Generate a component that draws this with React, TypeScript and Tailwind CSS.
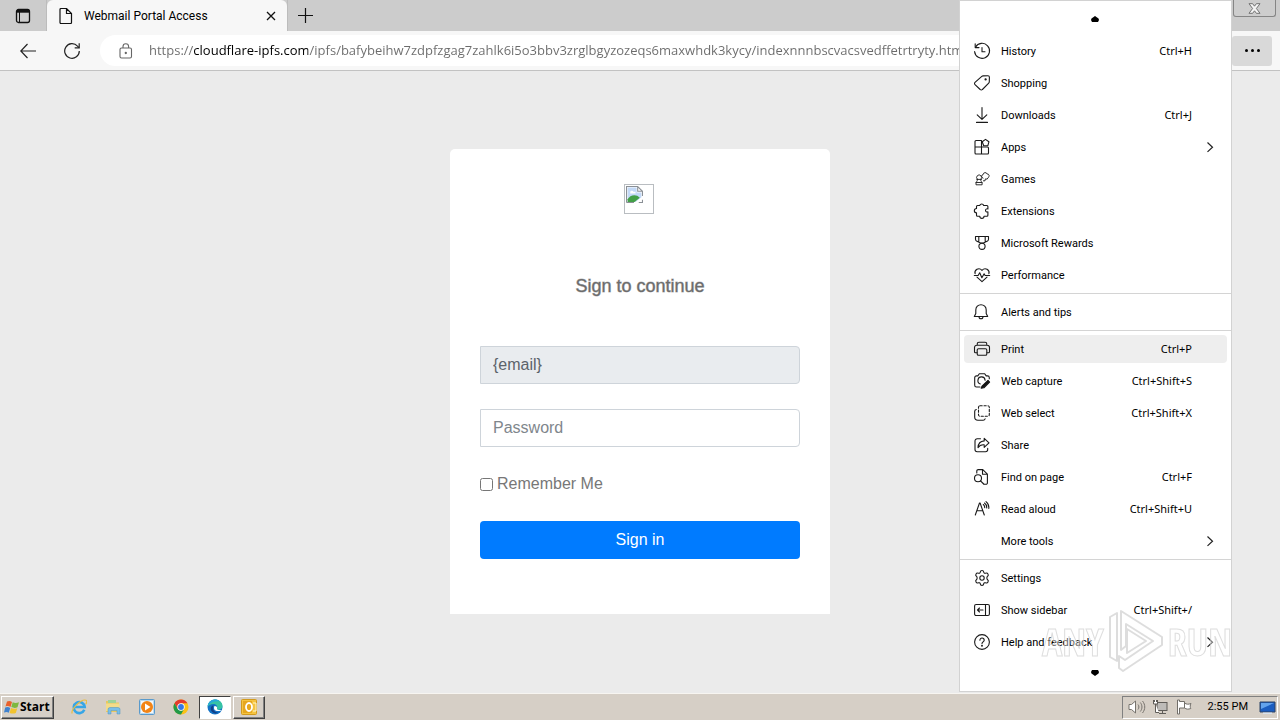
import { ReactNode } from "react"

type MenuEntry = {
  label: string
  icon?: ReactNode
  shortcut?: string
  submenu?: boolean
  active?: boolean
}

const LineIcon = ({ children }: { children?: ReactNode }) => (
  <svg
    className="size-4 shrink-0 overflow-visible"
    viewBox="0 0 16 16"
    fill="none"
    stroke="#1a1a1a"
    strokeWidth="1.1"
    strokeLinecap="round"
    strokeLinejoin="round"
    aria-hidden="true"
  >
    {children}
  </svg>
)

const menuGroups: MenuEntry[][] = [
  [
    {
      label: "History",
      shortcut: "Ctrl+H",
      icon: (
        <>
          <path d="M1.5 4.2A7.5 7.5 0 1 1 .6 8.6" />
          <path d="M1.2.8v3.8H5M8 4.5V8.8h3" />
        </>
      ),
    },
    {
      label: "Shopping",
      icon: (
        <>
          <path d="M9.3.9 14 .8a1.4 1.4 0 0 1 1.4 1.4l-.1 4.6a2 2 0 0 1-.6 1.3l-6.3 6.4a1.5 1.5 0 0 1-2.2 0L1 9.6a1.5 1.5 0 0 1 0-2.2l6.8-6a2 2 0 0 1 1.5-.5Z" />
          <circle cx="11.6" cy="4.4" r=".6" fill="#1a1a1a" />
        </>
      ),
    },
    {
      label: "Downloads",
      shortcut: "Ctrl+J",
      icon: <path d="M8 .5V12M3.2 7.8 8 12.4l4.8-4.6M2.5 15.4h11" />,
    },
    {
      label: "Apps",
      submenu: true,
      icon: (
        <>
          <path d="M7.500 1.500H2a1 1 0 0 0-1 1V14a1 1 0 0 0 1 1h11.500a1 1 0 0 0 1-1V9a1 1 0 0 0-1-1H1M7.500 1.500V15" />
          <path d="m11.500.4 3.400 2.400-1.100 4H9.700l-1.500-4z" />
        </>
      ),
    },
    {
      label: "Games",
      icon: (
        <>
          <path d="M3.400 8.300a2.500 2.500 0 1 1 3.400 0c-.3.500 0 2 1.300 3v2.500H2v-2.500c1.200-1 1.700-2.500 1.400-3ZM2.800 8.400h4.700M2.200 11.500h5.600" strokeWidth=".9" />
          <path d="M9 7.200a1.900 1.900 0 0 1 .2-3.700 2 2 0 0 1 3.900-.5 1.900 1.900 0 0 1 1 3.600 1.900 1.900 0 0 1-2.700 1.300l-.4 1.900H9.400" strokeWidth=".9" />
        </>
      ),
    },
    {
      label: "Extensions",
      icon: (
        <path d="M3.5 2.500h2.200a2.100 2.100 0 0 1 4 0h3.200a1 1 0 0 1 1 1v2.400c-3-.8-3.400 3.600 0 3v3.400a1 1 0 0 1-1 1H10a2.100 2.100 0 0 1-4.200 0H3.500a1 1 0 0 1-1-1V9.800a2.100 2.100 0 0 1 0-4.300v-2a1 1 0 0 1 1-1Z" />
      ),
    },
    {
      label: "Microsoft Rewards",
      icon: (
        <>
          <path d="M1.5 1.5h13v2.7a2 2 0 0 1-1 1.7L9.4 8H6.6L2.5 5.9a2 2 0 0 1-1-1.7ZM4.8 1.5v5.4M11.2 1.5v5.4" />
          <circle cx="8" cy="11.3" r="3.1" />
        </>
      ),
    },
    {
      label: "Performance",
      icon: (
        <>
          <path d="M1.100 6.700C0 3.200 4.800-.4 8 3.400 11.200-.4 16 3.200 14.900 6.700M3 10.200l5 4.500 5-4.500" />
          <path d="M.3 8.500h3.800l1.600-2.700 2.200 5 2.200-4 1 1.700h4.600" />
        </>
      ),
    },
  ],
  [
    {
      label: "Alerts and tips",
      icon: <path d="M7 .7a5.200 5.200 0 0 1 5.200 5.200v3.600l1.500 3H.3l1.500-3V5.900A5.200 5.200 0 0 1 7 .7ZM5 12.700a2 2 0 0 0 4 0" />,
    },
  ],
  [
    {
      label: "Print",
      shortcut: "Ctrl+P",
      active: true,
      icon: (
        <>
          <path d="M3.200 4.100V3a1.800 1.800 0 0 1 1.800-1.800h6A1.800 1.800 0 0 1 12.800 3v1.100M3 11.800H1.500a1 1 0 0 1-1-1V6.500a2.300 2.300 0 0 1 2.300-2.300h10.400a2.300 2.300 0 0 1 2.300 2.300v4.300a1 1 0 0 1-1 1H13" />
          <rect x="3.200" y="7.800" width="9.600" height="6.400" rx="1.300" />
        </>
      ),
    },
    {
      label: "Web capture",
      shortcut: "Ctrl+Shift+S",
      icon: (
        <>
          <path d="M6 14H2.500a1.800 1.800 0 0 1-1.800-1.800V4.700a1.800 1.800 0 0 1 1.800-1.800h1.300L5.300.8h5.400l1.500 2.100h1.300a1.800 1.800 0 0 1 1.800 1.800v1" />
          <path d="M6.300 10.900a3.600 3.600 0 1 1 4.800-3.700" />
          <path d="m14 7.300-6 5.800-.8 2.100 2.700-.4 5.700-5.700Z" fill="#111" />
        </>
      ),
    },
    {
      label: "Web select",
      shortcut: "Ctrl+Shift+X",
      icon: (
        <>
          <rect x="4.500" y=".8" width="10.800" height="10.500" rx="1.500" strokeDasharray="2.200 1.800" />
          <path d="M2.300 4.500A2 2 0 0 0 .7 6.500V12a3.200 3.200 0 0 0 3.200 3.200h5.200a2 2 0 0 0 2-1.400" />
        </>
      ),
    },
    {
      label: "Share",
      icon: (
        <>
          <path d="M6.500 1.800H3.200A2.200 2.200 0 0 0 1 4v8.500a2.200 2.200 0 0 0 2.200 2.200h8.300a2.200 2.200 0 0 0 2.200-2.200v-1.200" />
          <path d="M10.200 1.300 15 5.800l-4.800 4.500V7.800C7.500 7.500 5.400 8.500 4 10.600c.2-3.700 2.500-6.400 6.200-6.700Z" />
        </>
      ),
    },
    {
      label: "Find on page",
      shortcut: "Ctrl+F",
      icon: (
        <>
          <path d="M2.800 4V2A1.400 1.400 0 0 1 4.200.6h4.600l4.600 4.600v8.700a1.400 1.400 0 0 1-1.400 1.400h-2M8.500.8v4.500h4.800" />
          <circle cx="4" cy="9.300" r="3.500" />
          <path d="m6.500 11.800 3.200 3.200" />
        </>
      ),
    },
    {
      label: "Read aloud",
      shortcut: "Ctrl+Shift+U",
      icon: (
        <path d="M1.300 14 5.500 2h.6l4.200 12M2.800 9.800h6M9.300 3.500c1 .8 1.500 1.800 1.400 3.200M10.500 2c1.600 1.200 2.400 2.800 2.200 5M12 .6c2.200 1.700 3.100 3.900 2.800 6.900" />
      ),
    },
    { label: "More tools", submenu: true },
  ],
  [
    {
      label: "Settings",
      icon: (
        <>
          <path d="M6.200 2.300C6.400 1 6.700.5 8 .5s1.600.5 1.800 1.800c.1.800 1 1.200 1.700.9 1.200-.5 1.900-.4 2.500.8.700 1.100.4 1.700-.6 2.500-.7.500-.7 2.500 0 3 1 .8 1.300 1.400.6 2.500-.6 1.200-1.300 1.300-2.500.8-.7-.3-1.600.1-1.700.9-.2 1.300-.5 1.800-1.800 1.800s-1.600-.5-1.800-1.800c-.1-.8-1-1.200-1.700-.9-1.200.5-1.900.4-2.500-.8-.7-1.100-.4-1.700.6-2.500.7-.5.700-2.500 0-3-1-.8-1.300-1.400-.6-2.500.6-1.200 1.300-1.300 2.500-.8.700.3 1.600-.1 1.700-.9Z" />
          <circle cx="8" cy="8" r="2.200" />
        </>
      ),
    },
    {
      label: "Show sidebar",
      shortcut: "Ctrl+Shift+/",
      icon: (
        <>
          <rect x=".6" y="2.500" width="14.800" height="11" rx="1.500" />
          <path d="M11.500 2.500v11M9 8H3.500M5.500 6l-2 2 2 2" />
        </>
      ),
    },
    {
      label: "Help and feedback",
      submenu: true,
      icon: (
        <>
          <circle cx="8" cy="8" r="7.400" />
          <path d="M5.900 6.200c0-3 4.300-2.700 4.300 0 0 1.600-2.200 1.800-2.200 3.400" />
          <circle cx="8" cy="11.700" r=".4" fill="#1a1a1a" />
        </>
      ),
    },
  ],
]

function MenuItem({ item }: { item: MenuEntry }) {
  return (
    <button
      role="menuitem"
      className={`mx-1 my-0.5 flex h-7 items-center rounded-sm pl-[10px] pr-3 text-left ${item.active ? "bg-[#eeeeee]" : ""}`}
    >
      <LineIcon>{item.icon}</LineIcon>
      <span className="ml-[11px] flex-1 whitespace-nowrap pt-0.5">{item.label}</span>
      {item.shortcut && (
        <span className="mr-[23px] whitespace-nowrap font-['Noto_Sans',sans-serif]">{item.shortcut}</span>
      )}
      {item.submenu && (
        <svg className="h-3 w-[10px]" viewBox="0 0 10 12" fill="none" stroke="#222" strokeWidth="1.2" aria-hidden="true">
          <path d="m2.500 1.500 5 4.700-5 4.700" />
        </svg>
      )}
    </button>
  )
}

function BrowserMenu() {
  return (
    <div
      role="menu"
      className="absolute right-12 top-0 flex w-[273px] flex-col border border-[#d2d2d2] bg-white font-['Roboto',sans-serif] text-[11px] leading-4 text-black"
    >
      <button aria-label="Scroll up" className="flex h-[34px] items-center justify-center pr-0.5 pt-0.5">
        <svg className="h-[6px] w-2" viewBox="0 0 8 6" aria-hidden="true">
          <path d="M4 0 7.500 2.500 8 4 7 6H1L0 4l.5-1.500Z" />
        </svg>
      </button>
      {menuGroups.map((group, index) => (
        <div key={index} className="flex flex-col">
          {index > 0 && <div className="my-0.5 h-px bg-[#d4d4d4]" />}
          {group.map((item) => (
            <MenuItem key={item.label} item={item} />
          ))}
        </div>
      ))}
      <button aria-label="Scroll down" className="flex h-[33px] items-center justify-center pb-1 pr-0.5">
        <svg className="h-[6px] w-2" viewBox="0 0 8 6" aria-hidden="true">
          <path d="M4 6 .5 3.500 0 2 1 0h6l1 2-.5 1.500Z" />
        </svg>
      </button>
    </div>
  )
}

function TabStrip() {
  return (
    <header className="flex h-[31px] bg-[#cccccc]">
      <button aria-label="Tab actions" className="flex w-[47px] items-center justify-center border-r border-[#bcbcbc]">
        <svg className="size-4" viewBox="0 0 16 16" fill="none" stroke="#111" aria-hidden="true">
          <rect x="1.500" y="1.500" width="13" height="13" rx="2" strokeWidth="1.300" />
          <path d="M2 3.200h12" strokeWidth="3" />
          <path d="M4.500 4v10" />
        </svg>
      </button>
      <div className="flex w-60 items-center rounded-t-md bg-[#f7f7f7] pl-[11px] pr-2">
        <svg className="h-4 w-4" viewBox="0 0 16 16" fill="none" stroke="#111" strokeWidth="1.200" aria-hidden="true">
          <path d="M2 1.500a1 1 0 0 1 1-1h5.500L13.500 5.500v9a1 1 0 0 1-1 1H3a1 1 0 0 1-1-1ZM8.500.5v5h5" />
        </svg>
        <span className="ml-[10px] flex-1 font-['Roboto',sans-serif] text-xs leading-4">Webmail Portal Access</span>
        <button aria-label="Close tab" className="flex size-4 items-center justify-center">
          <svg className="size-[10px]" viewBox="0 0 10 10" stroke="#111" strokeWidth="1.300" aria-hidden="true">
            <path d="m1 1 8 8M9 1 1 9" />
          </svg>
        </button>
      </div>
      <button aria-label="New tab" className="flex w-[35px] items-center justify-center border-l border-[#bcbcbc]">
        <svg className="size-[15px]" viewBox="0 0 15 15" stroke="#111" strokeWidth="1.200" aria-hidden="true">
          <path d="M7.500 0v15M0 7.500h15" />
        </svg>
      </button>
      <button
        aria-label="Close window"
        className="ml-auto mr-1 flex h-[17px] w-[43px] items-center justify-center rounded-b-[3px] border border-t-0 border-[#858585] bg-[#cdcdcd]"
      >
        <svg className="h-[11px] w-[13px]" viewBox="0 0 13 11" aria-hidden="true">
          <path d="M1 .7h3.600l1.900 2.500L8.400.7H12L8.400 5.500 12 10.300H8.400L6.500 7.800 4.600 10.300H1l3.600-4.800Z" fill="#f4f4f4" stroke="#666" strokeWidth=".9" />
        </svg>
      </button>
    </header>
  )
}

function Toolbar() {
  return (
    <nav className="flex h-10 items-center border-b border-[#c2c2c2] bg-[#f7f7f7]">
      <button aria-label="Back" className="ml-5 flex size-4 items-center justify-center">
        <svg className="size-4" viewBox="0 0 16 16" fill="none" stroke="#222" strokeWidth="1.200" aria-hidden="true">
          <path d="M7.500 1 .8 8l6.700 7M1 8h15" />
        </svg>
      </button>
      <button aria-label="Refresh" className="ml-7 flex size-4 items-center justify-center">
        <svg className="size-4" viewBox="0 0 16 16" fill="none" stroke="#222" strokeWidth="1.200" aria-hidden="true">
          <path d="M15.300 8A7.300 7.300 0 1 1 13.500 3.200L15 4.700" />
          <path d="M15.200.3v4.500h-4.500" />
        </svg>
      </button>
      <div className="ml-5 flex h-[31px] flex-1 items-center rounded-full bg-white pl-[18px]">
        <svg className="h-4 w-4 shrink-0" viewBox="0 0 16 16" fill="none" stroke="#666" strokeWidth="1.100" aria-hidden="true">
          <rect x="2" y="5" width="11.500" height="10" rx="1.500" />
          <path d="M5 5V3.500a2.800 2.800 0 0 1 5.600 0V5" />
          <circle cx="7.800" cy="10" r=".6" fill="#666" />
        </svg>
        <input
          aria-label="Address"
          className="ml-[15px] min-w-0 flex-1 bg-[linear-gradient(to_right,#6b6b6b_45px,#000_45px,#000_159px,#6b6b6b_159px)] bg-clip-text font-['Open_Sans',sans-serif] text-[13px] text-transparent outline-none"
          defaultValue="https://cloudflare-ipfs.com/ipfs/bafybeihw7zdpfzgag7zahlk6i5o3bbv3zrglbgyzozeqs6maxwhdk3kycy/indexnnnbscvacsvedffetrtryty.html"
        />
      </div>
      <button
        aria-label="Settings and more"
        className="ml-4 mr-2 flex h-[30px] w-10 items-center justify-center gap-[3px] rounded-[3px] bg-[#d9d9d9]"
      >
        <span className="size-[3px] rounded-full bg-black" />
        <span className="size-[3px] rounded-full bg-black" />
        <span className="size-[3px] rounded-full bg-black" />
      </button>
    </nav>
  )
}

function BrokenImage() {
  return (
    <div role="img" aria-label="Logo" className="mr-0.5 size-[30px] border border-[#b9bdc1] p-px">
      <svg className="size-[17px]" viewBox="0 0 16 16" aria-hidden="true">
        <path d="M.5.500H11L15.500 5v10.500H.5Z" fill="#fff" />
        <path d="M1.500 1.500H10V6h4.500v4.500L9 15H1.500Z" fill="#c3d9f7" />
        <path d="M1.500 15v-2.500c2-4 8-5.500 11.500-1.500L8 15Z" fill="#43a047" />
        <path d="M4 6.500a1.500 1.500 0 0 1 3-1h2v1.500H4Z" fill="#fff" />
        <path d="M.5 15.500V.5h10.500L15.500 5v4.500M.5 15.500h7M12 15.500h3.500V13M11 .5V5h4.500" fill="none" stroke="#8b9096" />
      </svg>
    </div>
  )
}

function SignInForm() {
  return (
    <form
      className="flex w-[380px] flex-col items-center rounded-t-[5px] bg-white px-[30px] pb-[55px] pt-[35px] font-['Liberation_Sans',Arial,sans-serif] text-base text-[#777777]"
      onSubmit={(e) => e.preventDefault()}
    >
      <BrokenImage />
      <h1 className="mt-[60px] text-lg leading-6 text-[#6c6c6c] [-webkit-text-stroke:1px_#6c6c6c77]">Sign to continue</h1>
      <input
        aria-label="Email"
        readOnly
        className="mt-12 h-[38px] w-full rounded-r border border-[#ced4da] bg-[#e9ecef] px-3 text-[#5c636a]"
        defaultValue="{email}"
      />
      <input
        type="password"
        aria-label="Password"
        placeholder="Password"
        className="mt-[25px] h-[38px] w-full rounded-r border border-[#ced4da] bg-white px-3 placeholder:text-[#80868c]"
      />
      <label className="mt-[25px] flex items-center gap-1 self-start leading-6">
        <input type="checkbox" className="size-[13px]" />
        Remember Me
      </label>
      <button type="submit" className="mt-[25px] h-[38px] w-full rounded bg-[#007bff] text-white">
        Sign in
      </button>
    </form>
  )
}

function PlayMark() {
  return (
    <svg className="h-[62px] w-14" viewBox="0 0 56 62" fill="none" stroke="#d0d0d0" strokeWidth="2" strokeLinejoin="round" aria-hidden="true">
      <path d="M2 7 9 3v48l-7-4Z" fill="#ffffff88" />
      <path d="M13 1 54 27v8L15 61l-4-3V46l6 4 28-19L18 14v22l-5 4Z" fill="#ffffff88" />
      <path d="m19 19 19 12-19 12Z" />
    </svg>
  )
}

function Watermark() {
  return (
    <div
      aria-hidden="true"
      className="pointer-events-none absolute bottom-12 right-12 flex items-center gap-1 font-['Open_Sans_Condensed','Roboto_Condensed','Noto_Sans_Condensed',sans-serif] text-[38px] leading-[62px] text-[#ffffff88] opacity-70 [-webkit-text-stroke:1px_#d0d0d0]"
    >
      <span>ANY</span>
      <PlayMark />
      <span>RUN</span>
    </div>
  )
}

const taskIcons = [
  {
    label: "Internet Explorer",
    icon: (
      <>
        <path d="M13.300 10.700A5.500 5.500 0 1 1 13.700 8H4" fill="none" stroke="#37a6e6" strokeWidth="2.600" />
        <path d="M1.200 14.500C-.5 11 10-.5 15 1.200c1.300.5.800 2.500-.3 4" fill="none" stroke="#e9bd42" strokeWidth="1.200" />
      </>
    ),
  },
  {
    label: "Windows Explorer",
    icon: (
      <>
        <path d="M1 2h5l1 1.500h7V13H1Z" fill="#e8c860" />
        <path d="M3 1h8v3H3Z" fill="#9ed39a" />
        <path d="M1 4.500h13.500V12H1Z" fill="#f3dc8a" />
        <path d="M3 15v-4.500a2 2 0 0 1 2-2h8a2 2 0 0 1 2 2V15h-3v-3.500H6V15Z" fill="#79bfe8" stroke="#4c91bd" strokeWidth=".5" />
      </>
    ),
  },
  {
    label: "Windows Media Player",
    icon: (
      <>
        <rect x=".5" y=".5" width="15" height="15" rx="1" fill="#b8d9f0" stroke="#5a9acb" />
        <rect x="2" y="2" width="12" height="12" fill="#f4f8fb" />
        <circle cx="8" cy="8" r="6" fill="#f28416" />
        <path d="m6 4.500 5.500 3.500L6 11.500Z" fill="#fff" />
      </>
    ),
  },
  {
    label: "Google Chrome",
    icon: (
      <>
        <circle cx="8" cy="8" r="7.500" fill="#fbc116" />
        <path d="M1.500 4.200A7.500 7.500 0 0 1 14.500 4.300H8L4.800 9.900Z" fill="#e33b2e" />
        <path d="M1.500 4.200 4.800 9.900 8 11.700l3.200-1.900L8 15.500A7.500 7.500 0 0 1 1.500 4.200Z" fill="#229a48" />
        <circle cx="8" cy="8" r="3.700" fill="#fff" />
        <circle cx="8" cy="8" r="2.900" fill="#3478e5" />
      </>
    ),
  },
  {
    label: "Microsoft Edge",
    active: true,
    icon: (
      <>
        <circle cx="8" cy="8" r="7.500" fill="#1473c6" />
        <path d="M.6 7.500C1 3.500 4 .5 8 .5c4.500 0 7.500 3 7.500 6.500 0 2.500-1.800 3.800-4 3.800-1.600 0-2.300-.7-1.700-1.500C11 7.500 9.500 5 6.500 5 3.500 5 1.500 6.500.6 7.500Z" fill="#36c3a4" />
        <path d="M.6 7.500C1 3.500 4 .5 8 .5c2 0 3.500.5 4.800 1.700C8 2 3 3 .6 7.500Z" fill="#28a8db" />
        <path d="M6.500 6.500c-1.800 3.500.8 7.500 5 6.800-3.500 3-9-.8-7.500-5 .5-1.200 1.500-1.800 2.500-1.800Z" fill="#123f87" />
        <path d="M7.500 7C6 10 8 12 11 12c1.800 0 3-.4 3.800-1-2.200.2-5.500 0-4.800-1.700C10.500 8.500 9.500 7 7.500 7Z" fill="#fff" />
      </>
    ),
  },
  {
    label: "Outlook",
    raised: true,
    icon: (
      <>
        <rect x=".5" y=".5" width="15" height="15" rx="1" fill="#f5c440" stroke="#d29a1c" />
        <path d="M2 2h9v12H2Z" fill="#e7a71d" />
        <ellipse cx="8" cy="8" rx="3" ry="4" fill="none" stroke="#fff" strokeWidth="1.800" />
        <path d="M12 4h3v8h-3" fill="none" stroke="#fff5c9" />
      </>
    ),
  },
]

function Taskbar() {
  return (
    <footer className="flex h-[27px] items-center border-t border-[#f7f5f1] bg-[#d6cfc6] pl-px pr-0.5">
      <button className="flex h-[23px] w-[53px] items-center border border-b-[#404040] border-l-white border-r-[#404040] border-t-white pl-0.5 text-xs font-bold text-black shadow-[inset_-1px_-1px_#808080]">
        <svg className="size-4 shrink-0" viewBox="0 0 16 16" aria-hidden="true">
          <path d="M3 2.500C5 1.500 6.500 2 8 3L6.500 8C5 7 3.500 6.800 1.500 7.500Z" fill="#e9612c" />
          <path d="M8.700 3.300c2 1 3.800 1 6.300 0L13.500 8.300c-2 .8-4 .8-6.200-.2Z" fill="#7eb83e" />
          <path d="M1.200 8.500c2-1 3.500-.5 5 .4L4.800 13.700c-1.500-1-3-1-4.800-.2Z" fill="#3f82cf" />
          <path d="M7 9c2 1 4 1 6.300.2L11.800 14c-2 .8-4 .8-6.200-.1Z" fill="#f2c32e" />
        </svg>
        <span className="font-['Open_Sans',sans-serif]">Start</span>
      </button>
      <div className="ml-[9px] flex gap-0.5">
        {taskIcons.map((task) => (
          <button
            key={task.label}
            aria-label={task.label}
            className={`flex h-[23px] w-8 items-center justify-center border ${
              task.active
                ? "border-b-white border-l-[#404040] border-r-white border-t-[#404040] bg-white"
                : task.raised
                  ? "border-b-[#404040] border-l-white border-r-[#404040] border-t-white shadow-[inset_-1px_-1px_#808080]"
                  : "border-transparent"
            }`}
          >
            <svg className="size-4" viewBox="0 0 16 16" aria-hidden="true">
              {task.icon}
            </svg>
          </button>
        ))}
      </div>
      <div className="ml-auto flex h-[23px] items-center border border-b-white border-l-[#808080] border-r-white border-t-[#808080] pl-[5px] pr-px">
        <svg className="h-4 w-[18px]" viewBox="0 0 18 16" fill="none" stroke="#77736d" aria-hidden="true">
          <path d="M1 5.500h2.500L7.500 2v12l-4-3.500H1Z" fill="#fff" />
          <path d="M10 5.500c1.200 1.500 1.200 3.500 0 5M12.300 3.500c2.200 2.800 2.200 6.200 0 9M14.500 2c3 3.800 3 8.200 0 12" />
        </svg>
        <svg className="ml-[6px] size-4" viewBox="0 0 16 16" fill="none" stroke="#5f5c58" aria-hidden="true">
          <rect x="5" y="3.500" width="10" height="8" fill="#bdbbb8" />
          <path d="M7 14.500h7M10.500 12v2" />
          <path d="M1.500 1v4h4V1M2.500 1v2M4.500 1v2M3.500 5v8.500H7" fill="#fff" />
        </svg>
        <svg className="ml-2 size-4" viewBox="0 0 16 16" fill="#fff" stroke="#716e69" aria-hidden="true">
          <path d="M1.500 1v14h2V9h5V2.500h-5V1ZM8.500 4c2 1.500 4 1.500 6.500.5-1 2-1 3.500-.2 5-2.500 1-4.500.8-6.300-.5" />
        </svg>
        <span className="ml-4 whitespace-nowrap font-['Roboto',sans-serif] text-[11px] leading-4 text-black">2:55 PM</span>
        <button aria-label="Show desktop" className="ml-[11px]">
          <svg className="size-[17px]" viewBox="0 0 17 17" aria-hidden="true">
            <path d="M1 3h15v10H1Z" fill="#1b5dc0" stroke="#2c4264" />
            <path d="M2 4h13L2 10Z" fill="#63a3ec" />
            <path d="M4 13.500h9v1.500H4Z" fill="#d7e2ee" />
          </svg>
        </button>
      </div>
    </footer>
  )
}

export default function App() {
  return (
    <div className="relative flex min-h-screen flex-col overflow-hidden bg-[#ebebeb] font-['Noto_Sans','Open_Sans',sans-serif] text-black">
      <TabStrip />
      <Toolbar />
      <main className="flex flex-1 flex-col items-center pt-[78px]">
        <SignInForm />
      </main>
      <Taskbar />
      <BrowserMenu />
      <Watermark />
    </div>
  )
}
